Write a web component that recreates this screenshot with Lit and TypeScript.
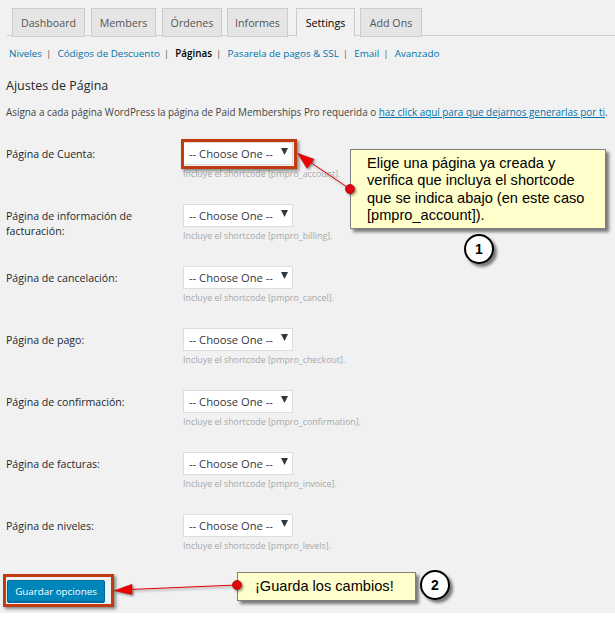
import { LitElement, html, css, svg } from "lit";
import { customElement } from "lit/decorators.js";

const TABS = ["Dashboard", "Members", "Órdenes", "Informes", "Settings", "Add Ons"];
const SUB = ["Niveles", "Códigos de Descuento", "Páginas", "Pasarela de pagos & SSL", "Email", "Avanzado"];
const ROWS = [
  ["Página de Cuenta:", "pmpro_account"],
  ["Página de información de facturación:", "pmpro_billing"],
  ["Página de cancelación:", "pmpro_cancel"],
  ["Página de pago:", "pmpro_checkout"],
  ["Página de confirmación:", "pmpro_confirmation"],
  ["Página de facturas:", "pmpro_invoice"],
  ["Página de niveles:", "pmpro_levels"],
];

@customElement("app-root")
export class AppRoot extends LitElement {
  static styles = css`
    :host { display: block; width: 615px; height: 617px; background: #fff; overflow: hidden; position: relative; font-family: "Open Sans", sans-serif; color: #444; }
    .page { height: 613px; background: #f1f1f1; padding-top: 8px; box-sizing: border-box; }
    .tabs { display: flex; margin: 0 0 0 7px; padding-left: 5px; border-bottom: 1px solid #ccc; height: 28px; width: 608px; box-sizing: border-box; }
    .tab { box-sizing: border-box; height: 29px; border: 1px solid #ccc; background: #e5e5e5; color: #555; font-size: 10.7px; font-weight: 500; display: flex; align-items: center; justify-content: center; }
    .tab.on { background: #f1f1f1; border-bottom-color: #f1f1f1; color: #000; }
    .sub { display: flex; align-items: center; height: 12px; margin: 11px 0 0 9px; font-size: 9.85px; color: #0073aa; white-space: pre; }
    .sub .cur { color: #000; font-weight: 600; }
    .sub .sep { color: #666; margin: 0 6px 0 4px; }
    h2 { margin: 19px 0 0 6px; font-size: 12.5px; line-height: 16px; font-weight: 500; color: #23282d; }
    .intro { margin: 11px 0 0 6px; font-size: 9.9px; line-height: 14px; color: #444; white-space: nowrap; }
    .intro a { color: #0073aa; text-decoration: underline; }
    .rows { margin: 23px 0 0 6px; }
    .row { display: grid; grid-template-columns: 177px 110px; height: 62px; }
    .label { font-size: 10.6px; font-weight: 500; line-height: 15px; padding-top: 5px; color: #23282d; width: 150px; }
    .sel { box-sizing: border-box; width: 110px; height: 23px; border: 1px solid #ddd; background: #fff; display: flex; align-items: center; padding-left: 5px; font-size: 11.2px; color: #32373c; position: relative; }
    .caret { position: absolute; right: 4px; top: 5px; width: 7px; height: 7px; }
    .hint { margin-top: 3px; font-size: 8.85px; line-height: 12px; color: #a8a8a8; white-space: nowrap; }
    .btn { margin: 4px 0 0 7px; box-sizing: border-box; width: 98px; height: 23px; background: #0085ba; border: 1px solid #006799; border-bottom-width: 2px; border-radius: 2px; color: #fff; font-size: 9.8px; display: flex; align-items: center; justify-content: center; }
    .shot { position: absolute; inset: 0; width: 615px; height: 617px; pointer-events: none; }
    .hl { position: absolute; box-sizing: border-box; border: 3px solid #c23b0f; box-shadow: 2px 2px 3px rgba(0,0,0,.45); }
    .hl.a { left: 181px; top: 139px; width: 116px; height: 30px; }
    .hl.b { left: 3px; top: 574px; width: 111px; height: 33px; }
    .note { position: absolute; box-sizing: border-box; background: #ffffcc; border: 1px solid #7f7f7f; box-shadow: 3px 3px 3px rgba(0,0,0,.5); color: #000; font-family: "Liberation Sans", sans-serif; font-size: 14.6px; white-space: nowrap; }
    .note.a { left: 350px; top: 149px; width: 256px; height: 80px; padding: 5px 0 0 16px; line-height: 17.4px; }
    .note.b { left: 237px; top: 572px; width: 179px; height: 29px; padding: 4px 0 0 17px; line-height: 18px; }
    .num { position: absolute; box-sizing: border-box; width: 30px; height: 30px; border: 2px solid #000; border-radius: 50%; background: #fff; color: #000; font-family: "Liberation Sans", sans-serif; font-weight: 700; font-size: 14px; display: flex; align-items: center; justify-content: center; box-shadow: 3px 3px 3px rgba(0,0,0,.5); }
    .num.a { left: 464px; top: 234px; }
    .num.b { left: 420px; top: 570px; }
  `;

  render() {
    const widths = [73, 65, 60, 61, 59, 62];
    const gaps = [6, 6, 5, 8, 5, 0];
    return html`
      <div class="page">
        <div class="tabs">
          ${TABS.map((t, i) => html`<div class="tab ${i === 4 ? "on" : ""}" style="width:${widths[i]}px;margin-right:${gaps[i]}px">${t}</div>`)}
        </div>
        <div class="sub">${SUB.map((s, i) => html`<span class=${i === 2 ? "cur" : ""}>${s}</span>${i < 5 ? html`<span class="sep">|</span>` : ""}`)}</div>
        <h2>Ajustes de Página</h2>
        <p class="intro">Asigna a cada página WordPress la página de Paid Memberships Pro requerida o <a>haz click aquí para que dejarnos generarlas por ti</a>.</p>
        <div class="rows">
          ${ROWS.map(([l, c]) => html`<div class="row">
            <div class="label">${l}</div>
            <div>
              <div class="sel">-- Choose One --
                <svg class="caret" viewBox="0 0 7 7"><path d="M0 0H7L3.5 7Z" fill="#32373c"/></svg>
              </div>
              <div class="hint">Incluye el shortcode [${c}].</div>
            </div>
          </div>`)}
        </div>
        <div class="btn">Guardar opciones</div>
      </div>
      <div class="hl a"></div>
      <div class="hl b"></div>
      <div class="note a">Elige una página ya creada y<br />verifica que incluya el shortcode<br />que se indica abajo (en este caso<br />[pmpro_account]).</div>
      <div class="note b">¡Guarda los cambios!</div>
      <div class="num a">1</div>
      <div class="num b">2</div>
      <svg class="shot" viewBox="0 0 615 617">
        <defs><filter id="s" x="-30%" y="-30%" width="170%" height="170%"><feDropShadow dx="1.5" dy="1.5" stdDeviation="1" flood-color="#000" flood-opacity=".45"/></filter></defs>
        ${svg`<g filter="url(#s)">
          <line x1="350" y1="189" x2="310" y2="162" stroke="#e00000" stroke-width="1"/>
          <path d="M297.7 153.3L314 159.3L307 168.3Z" fill="#f00000" stroke="#a00000" stroke-width=".5"/>
          <circle cx="350" cy="189" r="4.5" fill="#e8000f" stroke="#900000" stroke-width=".7"/>
          <line x1="237" y1="585" x2="130" y2="589.5" stroke="#e00000" stroke-width="1"/>
          <path d="M114 590.7L132 584.3L132 594.5Z" fill="#f00000" stroke="#a00000" stroke-width=".5"/>
          <circle cx="237" cy="585" r="4.5" fill="#e8000f" stroke="#900000" stroke-width=".7"/>
        </g>`}
      </svg>
    `;
  }
}
